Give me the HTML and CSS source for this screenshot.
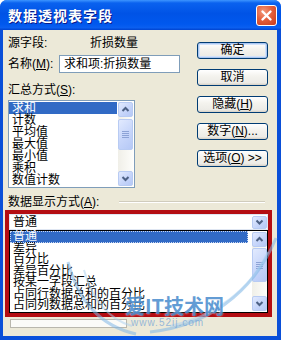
FILE: index.html
```html
<!DOCTYPE html>
<html lang="zh-CN">
<head>
  <meta charset="UTF-8" />
  <title>数据透视表字段</title>
  <link rel="stylesheet" href="styles.css">
</head>
<body>
  <div class="window">
    <div class="titlebar">
      <span class="title">数据透视表字段</span>
      <span class="close">
        <svg width="19" height="19" viewBox="0 0 19 19"><path d="M5.5 5.5 L13.5 13.5 M13.5 5.5 L5.5 13.5" stroke="#fff" stroke-width="2.4" stroke-linecap="round"/></svg>
      </span>
    </div>

    <div class="client">
      <div class="top">
        <div class="left">
          <div class="row"><span class="src-lbl">源字段:</span><span>折损数量</span></div>
          <div class="row name-row">
            <span>名称(<u>M</u>):</span>
            <div class="input">求和项:折损数量</div>
          </div>
          <div class="caption">汇总方式(<u>S</u>):</div>
          <div class="listbox sum-list">
            <ul class="items">
              <li class="sel">求和</li>
              <li>计数</li>
              <li>平均值</li>
              <li>最大值</li>
              <li>最小值</li>
              <li>乘积</li>
              <li>数值计数</li>
            </ul>
            <div class="scrollbar">
              <span class="sb-btn"><svg width="13" height="13" viewBox="0 0 13 13"><polyline points="3.5,8 6.5,5 9.5,8" fill="none" stroke="#4d6185" stroke-width="2"/></svg></span>
              <span class="sb-thumb short"><svg width="7" height="7" viewBox="0 0 7 7"><path d="M0 0.5H7M0 2.5H7M0 4.5H7M0 6.5H7" stroke="#8da3d6" stroke-width="1"/></svg></span>
              <span class="sb-track"></span>
              <span class="sb-btn"><svg width="13" height="13" viewBox="0 0 13 13"><polyline points="3.5,5 6.5,8 9.5,5" fill="none" stroke="#4d6185" stroke-width="2"/></svg></span>
            </div>
          </div>
        </div>

        <div class="buttons">
          <button class="btn default">确定</button>
          <button class="btn">取消</button>
          <button class="btn">隐藏(<u>H</u>)</button>
          <button class="btn">数字(<u>N</u>)...</button>
          <button class="btn">选项(<u>O</u>) &gt;&gt;</button>
        </div>
      </div>

      <div class="section-title">
        <span>数据显示方式(<u>A</u>):</span>
        <span class="etch"></span>
      </div>

      <div class="highlight">
        <div class="combo">
          <span class="combo-text">普通</span>
          <span class="sb-btn drop-btn"><svg width="13" height="12" viewBox="0 0 13 12"><polyline points="3.5,4.5 6.5,7.5 9.5,4.5" fill="none" stroke="#4d6185" stroke-width="2"/></svg></span>
        </div>
        <div class="listbox droplist">
          <ul class="items">
            <li class="sel focus">普通</li>
            <li>差异</li>
            <li>百分比</li>
            <li>差异百分比</li>
            <li>按某一字段汇总</li>
            <li>占同行数据总和的百分比</li>
            <li>占同列数据总和的百分比</li>
          </ul>
          <div class="scrollbar">
            <span class="sb-btn"><svg width="13" height="13" viewBox="0 0 13 13"><polyline points="3.5,8 6.5,5 9.5,8" fill="none" stroke="#4d6185" stroke-width="2"/></svg></span>
            <span class="sb-thumb"><svg width="7" height="7" viewBox="0 0 7 7"><path d="M0 0.5H7M0 2.5H7M0 4.5H7M0 6.5H7" stroke="#8da3d6" stroke-width="1"/></svg></span>
            <span class="sb-track"></span>
            <span class="sb-btn"><svg width="13" height="13" viewBox="0 0 13 13"><polyline points="3.5,5 6.5,8 9.5,5" fill="none" stroke="#4d6185" stroke-width="2"/></svg></span>
          </div>
        </div>
      </div>

      <div class="under-list"></div>

      <!-- site watermark over the bottom of the dialog -->
      <div class="watermark">
        <svg class="swoosh" width="281" height="340" viewBox="0 0 281 340">
          <path d="M68 262 C78 300 100 326 136 334" fill="none" stroke="#7fb6e6" stroke-width="3" opacity="0.55"/>
          <path d="M84 270 C92 300 110 320 132 326" fill="none" stroke="#a9d0f0" stroke-width="2" opacity="0.5"/>
          <path d="M150 332 C205 326 252 296 276 238" fill="none" stroke="#7fb6e6" stroke-width="3" opacity="0.55"/>
          <path d="M170 326 C215 316 250 290 268 252" fill="none" stroke="#a9d0f0" stroke-width="2" opacity="0.5"/>
        </svg>
        <span class="wm-name">爱IT技术网</span>
        <span class="wm-url">www.52ij.com</span>
      </div>
    </div>
  </div>
</body>
</html>
```

FILE: styles.css
```css
* { margin: 0; padding: 0; box-sizing: border-box; }

body {
  width: 281px;
  height: 340px;
  overflow: hidden;
  font-family: "Liberation Sans", "Noto Sans CJK SC", sans-serif;
  font-size: 12px;
  color: #000;
  background: #fff;
}

.window {
  width: 281px;
  height: 340px;
  display: flex;
  flex-direction: column;
  background: linear-gradient(to right, #0a4fd8, #0857e8 50%, #0a4fd8);
  border-radius: 7px 7px 0 0;
  overflow: hidden;
}

.titlebar {
  height: 30px;
  display: flex;
  align-items: center;
  justify-content: space-between;
  padding: 0 4px 0 8px;
  background: linear-gradient(to bottom, #3d95ff 0%, #0a62ef 10%, #0053e6 45%, #0058ee 80%, #0a5ff0 92%, #0043cf 100%);
}

.title {
  color: #fff;
  font-family: "Noto Sans CJK SC", sans-serif;
  font-weight: bold;
  font-size: 14px;
  letter-spacing: 1px;
  text-shadow: 1px 1px 0 #0a1a8a;
}

.close {
  width: 21px;
  height: 21px;
  display: flex;
  align-items: center;
  justify-content: center;
  border: 1px solid #fff;
  border-radius: 3px;
  background: radial-gradient(circle at 35% 30%, #f39a7c 0%, #e4603d 45%, #c83a1a 100%);
}

.client {
  flex: 1;
  margin: 0 4px 4px 3px;
  padding: 6px 0 0 5px;
  background: #ece9d8;
  position: relative;
}

.top {
  display: flex;
}

.left {
  width: 172px;
}

.row {
  display: flex;
  align-items: center;
  height: 14px;
  line-height: 14px;
}

.src-lbl {
  width: 82px;
}

.name-row {
  margin-top: 5px;
  height: 18px;
  justify-content: space-between;
}

.input {
  width: 121px;
  height: 18px;
  line-height: 16px;
  padding-left: 4px;
  background: #fff;
  border: 1px solid #7f9db9;
}

.caption {
  margin-top: 10px;
  height: 14px;
  line-height: 14px;
}

.listbox {
  display: flex;
  background: #fff;
  border: 1px solid #7f9db9;
}

.sum-list {
  margin-top: 3px;
  width: 127px;
  height: 88px;
  padding: 1px 1px 1px 0;
}

.items {
  list-style: none;
  flex: 1;
}

.sum-list .items li {
  height: 12px;
  line-height: 12px;
  padding-left: 3px;
  white-space: nowrap;
}

.items li.sel {
  background: #316ac5;
  color: #fff;
}

.items li.focus {
  outline: 1px dotted #c9d6f0;
  outline-offset: -1px;
}

.scrollbar {
  width: 15px;
  margin-left: 1px;
  display: flex;
  flex-direction: column;
  background: linear-gradient(to right, #f0efe8, #fdfdfa);
}

.sb-btn,
.sb-thumb {
  display: flex;
  align-items: center;
  justify-content: center;
  border: 1px solid #b8cbf3;
  border-radius: 2px;
  background: linear-gradient(135deg, #e2eafe 0%, #c6d5fa 55%, #b5c8f6 100%);
}

.sb-btn {
  height: 15px;
}

.sb-thumb {
  height: 34px;
  margin-top: 1px;
}

.sb-thumb.short {
  height: 31px;
  margin-top: 2px;
}

.sb-track {
  flex: 1;
}

.buttons {
  margin-left: 17px;
  padding-top: 6px;
  display: flex;
  flex-direction: column;
  gap: 10px;
}

.btn {
  width: 71px;
  height: 17px;
  font-family: "Liberation Sans", "Noto Sans CJK SC", sans-serif;
  font-size: 12px;
  line-height: 15px;
  color: #000;
  border: 1px solid #003c74;
  border-radius: 3px;
  background: linear-gradient(to bottom, #ffffff 0%, #f4f3ee 40%, #ecebe6 85%, #d6d0c5 100%);
}

.btn.default {
  box-shadow: inset 0 0 0 1px #a9c6f1, inset 0 0 0 2px #d2e2fa;
}

.section-title {
  margin-top: 7px;
  height: 14px;
  line-height: 14px;
  display: flex;
  align-items: center;
}

.etch {
  flex: 1;
  margin: 0 12px 0 20px;
  border-top: 1px solid #d0ccbd;
  border-bottom: 1px solid #fff;
}

.highlight {
  margin: 1px 0 0 -3px;
  width: 267px;
  border: 4px solid #b40d12;
}

.combo {
  height: 16px;
  display: flex;
  align-items: center;
  background: #fff;
  border: 1px solid #dfe6f2;
}

.combo-text {
  flex: 1;
  padding-left: 3px;
  line-height: 14px;
}

.drop-btn {
  width: 15px;
  height: 13px;
  margin-right: 0;
}

.droplist {
  height: 83px;
  border-color: #000;
}

.droplist .items li {
  height: 11.5px;
  line-height: 11.5px;
  padding-left: 3px;
  white-space: nowrap;
}

.droplist .scrollbar {
  margin: 1px 0 1px 4px;
}

.under-list {
  margin: 2px 0 0 2px;
  width: 117px;
  height: 9px;
  background: #fbfbf8;
  border: 1px solid #b9b7ad;
}

.watermark {
  position: absolute;
  left: 0;
  top: 0;
  right: 0;
  bottom: 0;
  pointer-events: none;
}

.swoosh {
  position: absolute;
  left: -3px;
  top: -30px;
}

.wm-name {
  position: absolute;
  left: 122px;
  top: 264px;
  font-family: "Noto Sans CJK SC", sans-serif;
  font-weight: bold;
  font-size: 20px;
  line-height: 24px;
  color: rgba(38, 118, 196, 0.72);
  text-shadow: 0 0 2px rgba(255, 255, 255, 0.8);
}

.wm-url {
  position: absolute;
  left: 128px;
  top: 288px;
  font-size: 10px;
  line-height: 10px;
  letter-spacing: 1px;
  color: rgba(110, 160, 215, 0.7);
}
```
